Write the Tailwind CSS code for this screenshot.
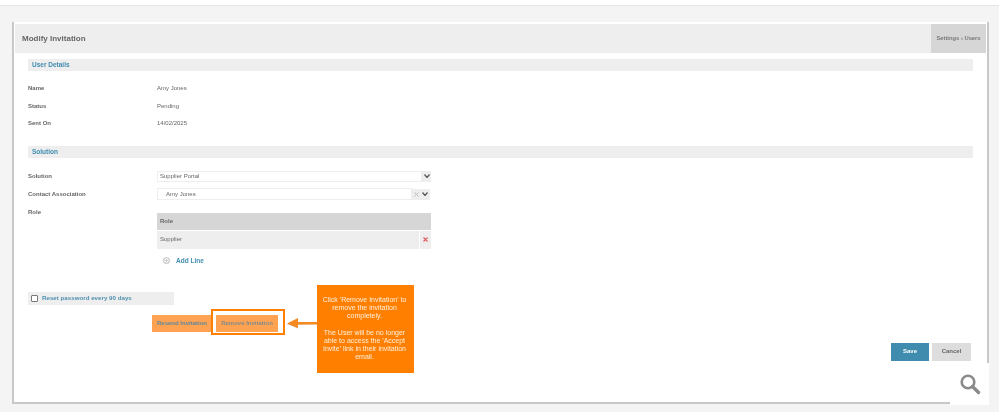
<!DOCTYPE html>
<html lang="en">
<head>
  <meta charset="UTF-8" />
  <title>Modify Invitation</title>
  <script src="https://cdn.jsdelivr.net/npm/@tailwindcss/browser@4"></script>
</head>
<body class="bg-[#f4f4f4] font-['Liberation_Sans',Arial,sans-serif] text-[#666] text-[6px] overflow-hidden">
<div class="relative w-[999px] h-[412px] overflow-hidden blur-[0.4px]">

  <!-- top bar -->
  <div class="h-[6px] bg-white border-b border-[#e6e6e6]"></div>

  <!-- panel -->
  <div class="ml-[12px] mt-[16px] w-[977px] h-[382px] bg-white border-l-2 border-r-2 border-b-2 border-[#c8c8c8] pt-[2px] pl-[1px] pr-[1px]">

    <!-- header -->
    <div class="flex h-[29px] bg-[#eeeeee] items-center justify-between">
      <div class="pl-[7px] text-[8px] font-bold text-[#666]">Modify Invitation</div>
      <div class="w-[55px] h-full bg-[#d6d6d6] flex items-center justify-center text-[5.8px] font-bold text-[#777]">Settings › Users</div>
    </div>

    <div class="pl-[13px] pr-[13px]">
      <div class="mt-[6px] h-[12px] bg-[#eeeeee] flex items-center pl-[4px] text-[6.5px] font-bold text-[#3f8cae]">User Details</div>

      <div class="mt-[9px] grid grid-cols-[129px_1fr] auto-rows-[17.5px] items-center">
        <div class="font-bold">Name</div><div>Amy Jones</div>
        <div class="font-bold">Status</div><div>Pending</div>
        <div class="font-bold">Sent On</div><div>14/02/2025</div>
      </div>

      <div class="mt-[13px] h-[12px] bg-[#eeeeee] flex items-center pl-[4px] text-[6.5px] font-bold text-[#3f8cae]">Solution</div>

      <div class="mt-[13px] flex items-center h-[11px]">
        <div class="w-[129px] font-bold">Solution</div>
        <div class="w-[265px] h-[11px] border border-[#eeeeee] flex items-center pl-[2px]">Supplier Portal</div>
        <div class="w-[9px] h-[11px] bg-[#eeeeee] flex items-center justify-center">
          <svg width="6" height="4" viewBox="0 0 6 4"><path d="M0.5 0.5 L3 3.5 L5.5 0.5" fill="none" stroke="#555" stroke-width="1.2"/></svg>
        </div>
      </div>

      <div class="mt-[7px] flex items-center h-[11px]">
        <div class="w-[129px] font-bold">Contact Association</div>
        <div class="w-[255px] h-[12px] border border-[#eeeeee] flex items-center pl-[8px]">Amy Jones</div>
        <div class="w-[18px] h-[11px] bg-[#eeeeee] flex items-center justify-around px-[1px]">
          <svg width="5" height="5" viewBox="0 0 5 5"><path d="M0.5 0.5 L4.5 4.5 M4.5 0.5 L0.5 4.5" stroke="#bbb" stroke-width="1"/></svg>
          <svg width="6" height="4" viewBox="0 0 6 4"><path d="M0.5 0.5 L3 3.5 L5.5 0.5" fill="none" stroke="#555" stroke-width="1.2"/></svg>
        </div>
      </div>

      <div class="mt-[7px] flex">
        <div class="w-[129px] pt-[1px] font-bold">Role</div>
        <div class="w-[274px] pt-[6px]">
          <div class="h-[17px] bg-[#d6d6d6] flex items-center pl-[3px] font-bold">Role</div>
          <div class="mt-[1px] h-[18px] bg-[#eeeeee] flex items-center justify-between">
            <span class="pl-[3px]">Supplier</span>
            <span class="w-[12px] h-full border-l border-white flex items-center justify-center">
              <svg width="5" height="5" viewBox="0 0 5 5"><path d="M0.5 0.5 L4.5 4.5 M4.5 0.5 L0.5 4.5" stroke="#e25c5c" stroke-width="1.1"/></svg>
            </span>
          </div>
          <div class="mt-[6px] flex items-center h-[12px] pl-[6px] gap-[6px]">
            <svg width="7" height="7" viewBox="0 0 7 7"><circle cx="3.5" cy="3.5" r="2.8" fill="none" stroke="#c4c4c4" stroke-width="1.1"/><path d="M2 3.5 H5 M3.5 2 V5" stroke="#c4c4c4" stroke-width="0.8"/></svg>
            <span class="font-bold text-[#3f8cae] text-[6.5px]">Add Line</span>
          </div>
        </div>
      </div>

      <div class="mt-[25px] w-[146px] h-[13px] bg-[#eeeeee] flex items-center pl-[3px] gap-[4px]">
        <span class="w-[7px] h-[7px] bg-white border border-[#777] rounded-[1px]"></span>
        <span class="font-bold text-[#4f8fae] text-[6.2px]">Reset password every 90 days</span>
      </div>

      <div class="mt-[10px] pl-[124px] flex">
        <div class="h-[17px] w-[60px] bg-[#ffa352] flex items-center justify-center font-bold text-[#5d87a0]">Resend Invitation</div>
        <div class="h-[17px] w-[62px] ml-[4px] bg-[#ffa352] flex items-center justify-center font-bold text-[#7f8a8c]">Remove Invitation</div>
      </div>

      <div class="mt-[11px] pr-[2px] flex justify-end gap-[3px]">
        <div class="w-[38px] h-[18px] bg-[#3f8cae] text-white font-bold flex items-center justify-center">Save</div>
        <div class="w-[39px] h-[18px] bg-[#dddddd] font-bold flex items-center justify-center">Cancel</div>
      </div>
    </div>
  </div>

  <!-- highlight around Remove Invitation -->
  <div class="absolute left-[211px] top-[309px] w-[74px] h-[26px] border-2 border-[#ff8000]"></div>

  <!-- arrow -->
  <svg class="absolute left-[286px] top-[316px]" width="32" height="14" viewBox="0 0 32 14">
    <path d="M32 9 H12 V12.5 L1 8 Z" fill="#b9a184" opacity="0.7"/>
    <path d="M32 6 H12 V2 L1 7.5 L12 12 V8.6 H32 Z" fill="#f6891f"/>
  </svg>

  <!-- callout -->
  <div class="absolute left-[317px] top-[285px] w-[97px] h-[88px] bg-[#ff8000] text-[#ffeedd] text-[7px] leading-[8.15px] text-center pl-[2px] pr-[4px] pt-[11px]">
    Click 'Remove Invitation' to remove the invitation completely.<br><br>The User will be no longer able to access the 'Accept Invite' link in their invitation email.
  </div>

  <!-- magnifier tab -->
  <div class="absolute left-[950px] top-[363px] w-[39px] h-[42px] bg-white flex items-center justify-center">
    <svg width="22" height="22" viewBox="0 0 22 22"><circle cx="9" cy="9" r="6.3" fill="none" stroke="#8a8a8a" stroke-width="2.6"/><path d="M13.5 13.5 L19.5 19.5" stroke="#8a8a8a" stroke-width="3.4" stroke-linecap="round"/></svg>
  </div>
</div>
</body>
</html>
